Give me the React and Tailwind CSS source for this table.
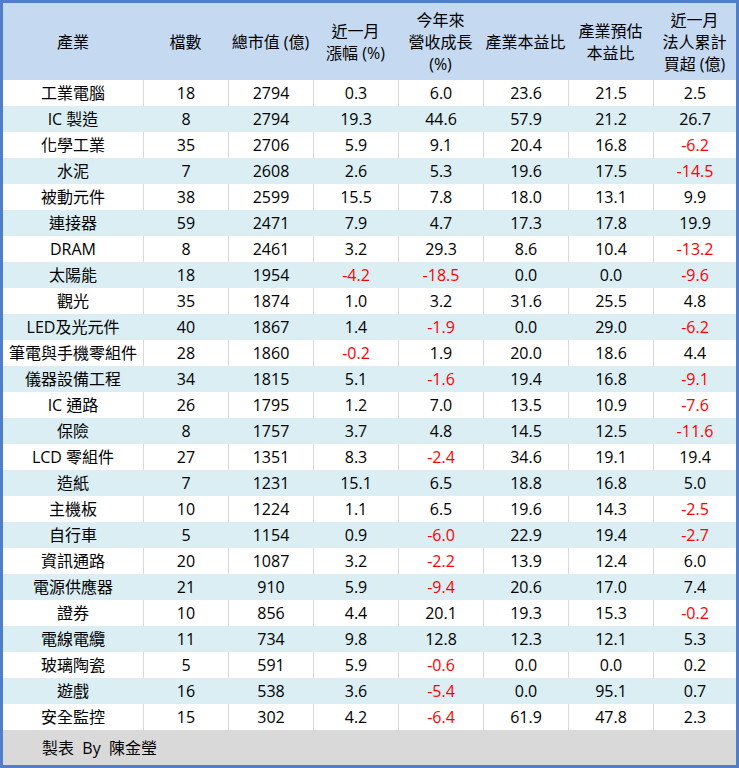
const rows = [
  ['工業電腦', '18', '2794', '0.3', '6.0', '23.6', '21.5', '2.5'],
  ['IC 製造', '8', '2794', '19.3', '44.6', '57.9', '21.2', '26.7'],
  ['化學工業', '35', '2706', '5.9', '9.1', '20.4', '16.8', '-6.2'],
  ['水泥', '7', '2608', '2.6', '5.3', '19.6', '17.5', '-14.5'],
  ['被動元件', '38', '2599', '15.5', '7.8', '18.0', '13.1', '9.9'],
  ['連接器', '59', '2471', '7.9', '4.7', '17.3', '17.8', '19.9'],
  ['DRAM', '8', '2461', '3.2', '29.3', '8.6', '10.4', '-13.2'],
  ['太陽能', '18', '1954', '-4.2', '-18.5', '0.0', '0.0', '-9.6'],
  ['觀光', '35', '1874', '1.0', '3.2', '31.6', '25.5', '4.8'],
  ['LED及光元件', '40', '1867', '1.4', '-1.9', '0.0', '29.0', '-6.2'],
  ['筆電與手機零組件', '28', '1860', '-0.2', '1.9', '20.0', '18.6', '4.4'],
  ['儀器設備工程', '34', '1815', '5.1', '-1.6', '19.4', '16.8', '-9.1'],
  ['IC 通路', '26', '1795', '1.2', '7.0', '13.5', '10.9', '-7.6'],
  ['保險', '8', '1757', '3.7', '4.8', '14.5', '12.5', '-11.6'],
  ['LCD 零組件', '27', '1351', '8.3', '-2.4', '34.6', '19.1', '19.4'],
  ['造紙', '7', '1231', '15.1', '6.5', '18.8', '16.8', '5.0'],
  ['主機板', '10', '1224', '1.1', '6.5', '19.6', '14.3', '-2.5'],
  ['自行車', '5', '1154', '0.9', '-6.0', '22.9', '19.4', '-2.7'],
  ['資訊通路', '20', '1087', '3.2', '-2.2', '13.9', '12.4', '6.0'],
  ['電源供應器', '21', '910', '5.9', '-9.4', '20.6', '17.0', '7.4'],
  ['證券', '10', '856', '4.4', '20.1', '19.3', '15.3', '-0.2'],
  ['電線電纜', '11', '734', '9.8', '12.8', '12.3', '12.1', '5.3'],
  ['玻璃陶瓷', '5', '591', '5.9', '-0.6', '0.0', '0.0', '0.2'],
  ['遊戲', '16', '538', '3.6', '-5.4', '0.0', '95.1', '0.7'],
  ['安全監控', '15', '302', '4.2', '-6.4', '61.9', '47.8', '2.3'],
]

const headers = [
  ['產業'],
  ['檔數'],
  ['總市值 (億)'],
  ['近一月', '漲幅 (%)'],
  ['今年來', '營收成長', '(%)'],
  ['產業本益比'],
  ['產業預估', '本益比'],
  ['近一月', '法人累計', '買超 (億)'],
]

const cols = 'grid grid-cols-[140px_repeat(6,85px)_83px]'

export default function App() {
  return (
    <div
      className="w-[739px] h-[768px] border-[3px] border-[#4f7fcc] bg-white text-[16px] text-black flex flex-col"
      style={{ fontFamily: '"Open Sans", "Noto Sans CJK TC", sans-serif' }}
    >
      <div className={`${cols} h-[77px] bg-[#c5d9f1] leading-[22px]`}>
        {headers.map((h, i) => (
          <div key={i} className="flex flex-col items-center justify-center text-center">
            {h.map((line) => (
              <span key={line}>{line}</span>
            ))}
          </div>
        ))}
      </div>

      {rows.map((r, i) => {
        const odd = i % 2 === 1
        return (
          <div key={r[0]} className={`${cols} h-[26px] leading-[26px] ${odd ? 'bg-[#daeef3]' : 'bg-white'}`}>
            {r.map((v, j) => (
              <div
                key={j}
                className={`text-center whitespace-nowrap ${j > 0 ? (odd ? 'border-l border-[#daeef3]' : 'border-l border-[#d9d9d9]') : ''} ${v.startsWith('-') ? 'text-[#ff0000]' : ''}`}
              >
                {v}
              </div>
            ))}
          </div>
        )
      })}

      <div className="flex-1 bg-[#d9d9d9] flex items-center pl-[39px]">
        <span>製表&nbsp; By&nbsp; 陳金瑩</span>
      </div>
    </div>
  )
}
